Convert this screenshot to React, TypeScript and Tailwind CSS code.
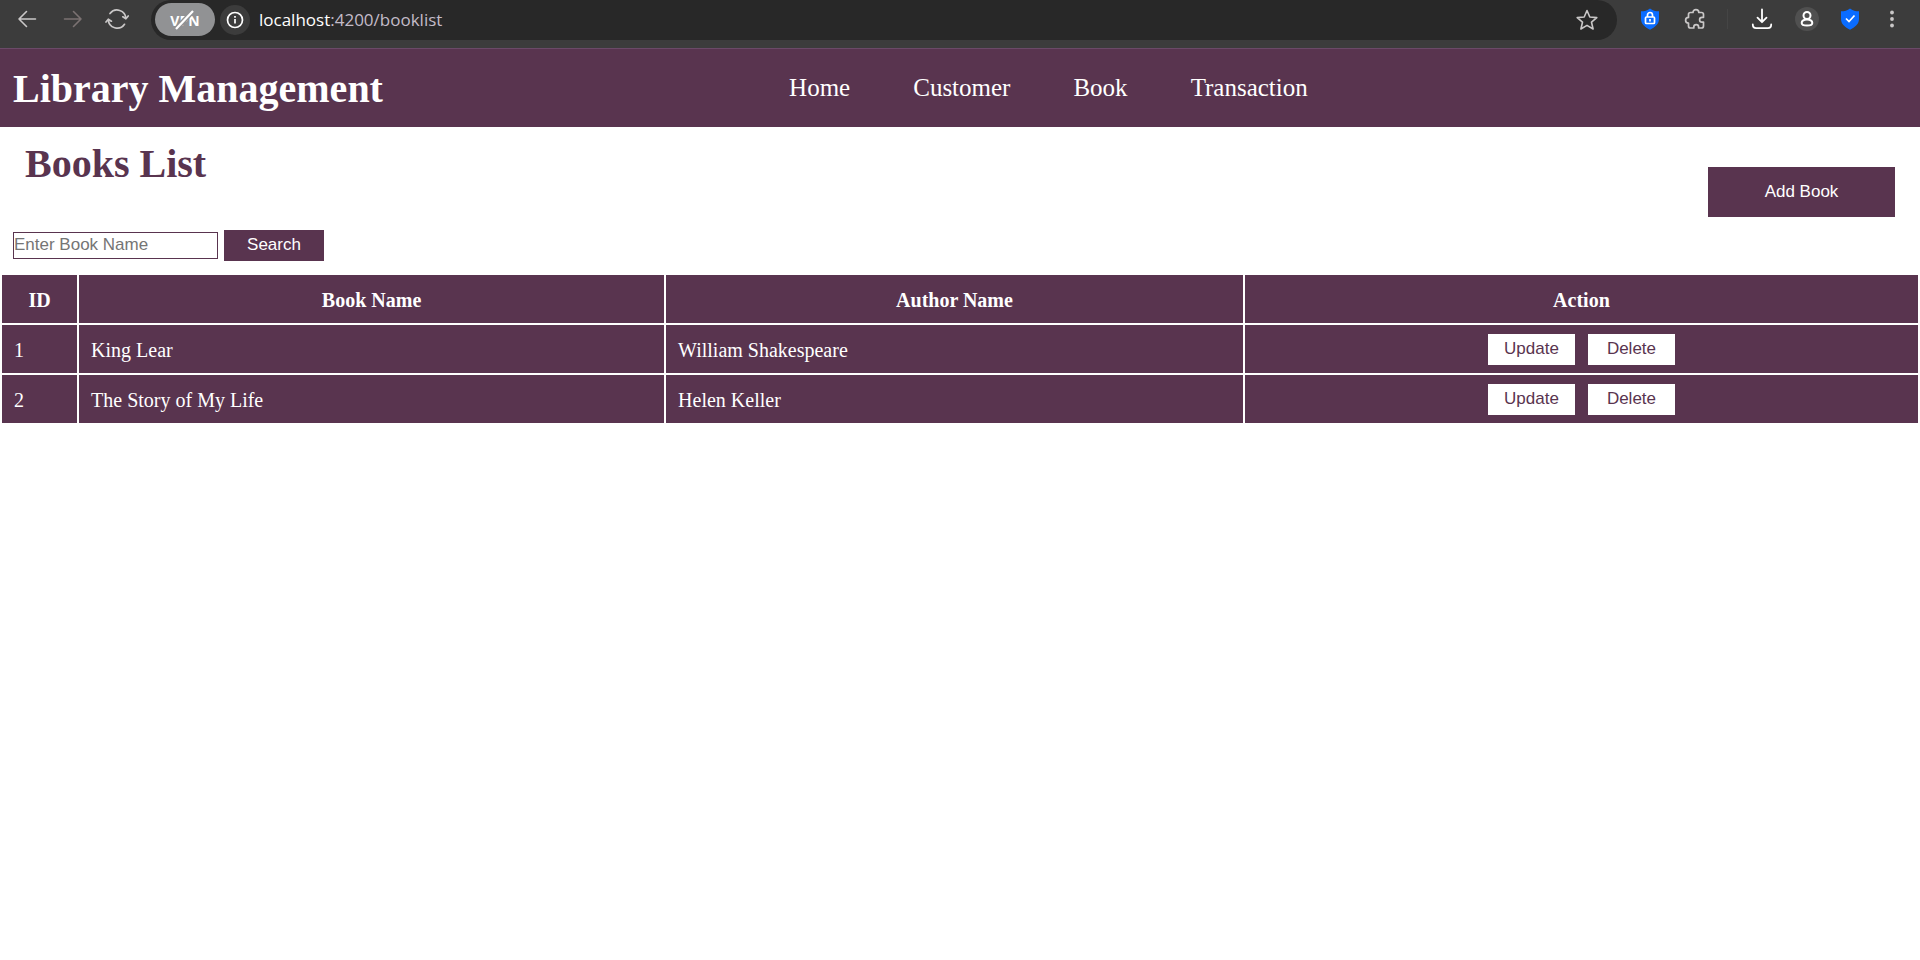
import { type ReactNode } from "react";

const books = [
  { id: 1, name: "King Lear", author: "William Shakespeare" },
  { id: 2, name: "The Story of My Life", author: "Helen Keller" },
];

const links = ["Home", "Customer", "Book", "Transaction"];

function IconButton({ label, children }: { label: string; children: ReactNode }) {
  return (
    <button type="button" aria-label={label} className="flex size-6 shrink-0 items-center justify-center">
      {children}
    </button>
  );
}

function BrowserBar() {
  return (
    <div className="flex h-12 items-start bg-[#3c3c3c] text-[#c9c7c7]">
      <div className="flex h-[38px] items-center gap-[21px] pl-[15px]">
        <IconButton label="Back">
          <svg width="24" height="24" viewBox="0 0 24 24" fill="none" stroke="currentColor" strokeWidth="1.6" strokeLinecap="round" strokeLinejoin="round">
            <path d="M20.5 12H4M11.5 4.5 4 12l7.5 7.5" />
          </svg>
        </IconButton>
        <IconButton label="Forward">
          <svg width="24" height="24" viewBox="0 0 24 24" fill="none" stroke="#7b7272" strokeWidth="1.6" strokeLinecap="round" strokeLinejoin="round">
            <path d="M4.5 12H21M13.5 4.5 21 12l-7.5 7.5" />
          </svg>
        </IconButton>
        <IconButton label="Reload">
          <svg width="24" height="24" viewBox="0 0 24 24" fill="none" stroke="currentColor" strokeWidth="1.7" strokeLinecap="round" strokeLinejoin="round">
            <path d="M5 6.500A8.900 8.900 0 0 1 20.900 11.500M23.200 9l-2.300 2.800L17.800 9.800M19.500 17.300A8.900 8.900 0 0 1 3.300 12.500M1 15l2.300-2.800L6.400 14.200" />
          </svg>
        </IconButton>
      </div>
      <div className="ml-[22px] flex h-10 flex-1 items-center rounded-full bg-[#282828] pr-[18px] pl-1">
        <button type="button" className="relative mb-px flex h-[33px] w-[60px] items-center justify-center rounded-full bg-[#919294] pt-0.5 font-[Open_Sans,sans-serif] text-sm leading-5 font-bold text-white">
          VPN
          <svg className="absolute inset-0 m-auto" width="20" height="22" viewBox="0 0 20 22" fill="none">
            <path d="M1 20 18 2" stroke="#919294" strokeWidth="5" />
            <path d="M1 20 18 2" stroke="#fff" strokeWidth="2.2" />
          </svg>
        </button>
        <button type="button" aria-label="Site information" className="mb-px ml-[5px] flex size-[30px] items-center justify-center rounded-full bg-[#3c3c3c] text-white">
          <svg width="18" height="18" viewBox="0 0 18 18" fill="none" stroke="currentColor" strokeWidth="1.7">
            <circle cx="9" cy="9" r="7.5" />
            <path d="M9 8v4.500M9 5v1.700" />
          </svg>
        </button>
        <span className="ml-[9px] flex-1 font-[Open_Sans,sans-serif] text-[17px] leading-6 text-[#c3bcc8]">
          <span className="text-white">localhost</span>:4200/booklist
        </span>
        <IconButton label="Bookmark">
          <svg width="24" height="24" viewBox="0 0 24 24" fill="none" stroke="currentColor" strokeWidth="1.6" strokeLinejoin="round">
            <path d="m12 2.500 2.800 6.500 7 .6-5.300 4.600 1.600 6.800L12 17.400 5.900 21l1.600-6.800L2.200 9.600l7-.6z" />
          </svg>
        </IconButton>
      </div>
      <div className="flex h-[38px] items-center pr-4 pl-[21px]">
        <IconButton label="Privacy lock">
          <svg width="24" height="24" viewBox="0 0 24 24" fill="none">
            <path d="M12 1.500c2.500 2 5.500 2.800 9 2.800V12c0 5-4 8.300-9 10.800C7 20.300 3 17 3 12V4.300c3.500 0 6.500-.8 9-2.800z" fill="#0a6cff" />
            <rect x="7.500" y="10" width="9" height="6.500" rx="1" stroke="#fff" strokeWidth="1.700" />
            <path d="M9.500 10V8a2.500 2.500 0 0 1 5 0V10M12 12v2.500" stroke="#fff" strokeWidth="1.700" />
          </svg>
        </IconButton>
        <span className="w-[21px]" />
        <IconButton label="Extensions">
          <svg width="24" height="24" viewBox="0 0 24 24" fill="none" stroke="currentColor" strokeWidth="1.700" strokeLinejoin="round">
            <path d="M7.500 5.500H10a2.900 2.900 0 0 1 5.800 0H18.500a2 2 0 0 1 2 2V10.300H19a2.400 2.400 0 0 0 0 4.800H20.500V19a2 2 0 0 1-2 2H15.600V20a2.400 2.400 0 0 0-4.800 0V21H7.500a2 2 0 0 1-2-2V16.200a2.900 2.900 0 0 1 0-5.800V7.500a2 2 0 0 1 2-2z" />
          </svg>
        </IconButton>
        <span className="mr-[22px] ml-5 h-5 w-px bg-[#454545]" />
        <IconButton label="Downloads">
          <svg width="24" height="24" viewBox="0 0 24 24" fill="none" stroke="#fff" strokeWidth="1.800" strokeLinecap="round" strokeLinejoin="round">
            <path d="M12 2.500v12.500M7.500 10.700 12 15.200 16.500 10.700M2.800 17.500c0 2.600 1 3.600 3.300 3.600h11.800c2.300 0 3.300-1 3.300-3.600" />
          </svg>
        </IconButton>
        <span className="w-[21px]" />
        <button type="button" aria-label="Profile" className="flex size-6 items-center justify-center rounded-full bg-[#505050]">
          <svg width="16" height="18" viewBox="0 0 16 18" fill="none" stroke="#fff" strokeWidth="2">
            <circle cx="8" cy="5.500" r="3.500" />
            <path d="M8 9.500c3.500 0 5.300 1.500 5.300 3.500S11.500 15.500 8 15.500 2.700 15 2.700 13 4.500 9.500 8 9.500z" />
          </svg>
        </button>
        <span className="w-[19px]" />
        <IconButton label="Protection">
          <svg width="24" height="24" viewBox="0 0 24 24" fill="none">
            <path d="M12 1.500c2.500 2 5.500 2.800 9 2.800V12c0 5-4 8.300-9 10.800C7 20.300 3 17 3 12V4.300c3.500 0 6.500-.8 9-2.800z" fill="#0a6cff" />
            <path d="m8 11.500 3 3 5.500-6" stroke="#fff" strokeWidth="1.700" />
          </svg>
        </IconButton>
        <span className="w-[18px]" />
        <IconButton label="Menu">
          <svg width="24" height="24" viewBox="0 0 24 24" fill="currentColor">
            <circle cx="12" cy="5.500" r="1.900" />
            <circle cx="12" cy="12" r="1.900" />
            <circle cx="12" cy="18.500" r="1.900" />
          </svg>
        </IconButton>
      </div>
    </div>
  );
}

const rowButton =
  "flex h-[31px] w-[87px] items-center justify-center bg-white pb-px font-[Liberation_Sans,Arial,sans-serif] text-[17px] leading-5 text-[#59344f]";

export default function App() {
  return (
    <div className="min-h-screen bg-white font-[Liberation_Serif,Times_New_Roman,serif]">
      <BrowserBar />
      <header className="flex h-[79px] items-center border-t border-[#6b4a68] bg-[#59344f] text-white">
        <h1 className="w-[41.1%] pt-0.5 pl-[13px] text-[40px] leading-[46px] font-bold">Library Management</h1>
        <nav className="flex gap-[63px] text-[25px] leading-7">
          {links.map((link) => (
            <a key={link} href={"#" + link.toLowerCase()}>
              {link}
            </a>
          ))}
        </nav>
      </header>
      <main className="text-xl leading-6">
        <div className="flex justify-between pt-[14px] pr-[25px] pl-[25px]">
          <h2 className="text-[40px] leading-[46px] font-bold text-[#59344f]">Books List</h2>
          <button type="button" className="mt-[26px] h-[50px] w-[187px] bg-[#59344f] pb-px font-[Liberation_Sans,Arial,sans-serif] text-[17px] leading-5 text-white">
            Add Book
          </button>
        </div>
        <form className="flex items-center gap-1.5 px-[13px] pt-[13px] pb-3 font-[Liberation_Sans,Arial,sans-serif] text-[17px] leading-5" onSubmit={(event) => event.preventDefault()}>
          <input type="text" aria-label="Book name" placeholder="Enter Book Name" className="h-[27px] w-[205px] border border-[#59344f] pb-0.5 text-[#59344f] placeholder:text-[#757575]" />
          <button type="submit" className="h-[31px] w-[100px] bg-[#59344f] pb-px text-white">
            Search
          </button>
        </form>
        <table className="w-full table-fixed border-separate border-spacing-0.5 text-white">
          <colgroup>
            <col className="w-[3.93%]" />
            <col className="w-[30.63%]" />
            <col className="w-[30.2%]" />
            <col />
          </colgroup>
          <thead>
            <tr className="h-12 bg-[#59344f]">
              <th className="pt-0.5">ID</th>
              <th className="pt-0.5">Book Name</th>
              <th className="pt-0.5">Author Name</th>
              <th className="pt-0.5">Action</th>
            </tr>
          </thead>
          <tbody>
            {books.map((book) => (
              <tr key={book.id} className="h-12 bg-[#59344f]">
                <td className="px-3 pt-0.5">{book.id}</td>
                <td className="px-3 pt-0.5">{book.name}</td>
                <td className="px-3 pt-0.5">{book.author}</td>
                <td>
                  <div className="flex justify-center gap-[13px]">
                    <button type="button" className={rowButton}>Update</button>
                    <button type="button" className={rowButton}>Delete</button>
                  </div>
                </td>
              </tr>
            ))}
          </tbody>
        </table>
      </main>
    </div>
  );
}
